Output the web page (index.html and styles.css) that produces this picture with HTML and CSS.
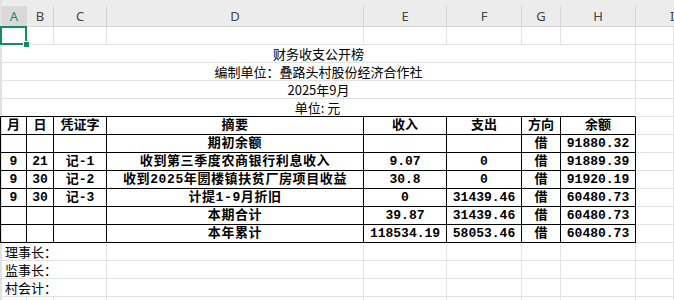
FILE: index.html
```html
<!DOCTYPE html>
<html lang="zh-CN">
<head>
<meta charset="utf-8">
<title>财务收支公开榜</title>
<link rel="stylesheet" href="styles.css">
</head>
<body>
<div class="sheet">
  <div class="colbar">
    <div class="grid">
      <div class="h sel">A</div><div class="h">B</div><div class="h">C</div><div class="h">D</div><div class="h">E</div><div class="h">F</div><div class="h">G</div><div class="h">H</div><div class="h last">I</div>
    </div>
  </div>
  <div class="grid">
    <!-- row 1 -->
    <div class="c a1"><span class="cursor"></span><span class="handle"></span></div><div class="c"></div><div class="c"></div><div class="c"></div><div class="c"></div><div class="c"></div><div class="c"></div><div class="c"></div><div class="c"></div>
    <!-- rows 2-5 titles -->
    <div class="c m8">财务收支公开榜</div><div class="c"></div>
    <div class="c m8">编制单位：叠路头村股份经济合作社</div><div class="c"></div>
    <div class="c m8">2025年9月</div><div class="c"></div>
    <div class="c m8 tb">单位: 元</div><div class="c"></div>
    <!-- row 6 header -->
    <div class="c t tl">月</div><div class="c t">日</div><div class="c t">凭证字</div><div class="c t zh">摘要</div><div class="c t">收入</div><div class="c t">支出</div><div class="c t">方向</div><div class="c t">余额</div><div class="c"></div>
    <!-- row 7 -->
    <div class="c t tl"></div><div class="c t"></div><div class="c t"></div><div class="c t zh">期初余额</div><div class="c t"></div><div class="c t"></div><div class="c t">借</div><div class="c t">91880.32</div><div class="c"></div>
    <!-- row 8 -->
    <div class="c t tl">9</div><div class="c t">21</div><div class="c t">记-1</div><div class="c t zh">收到第三季度农商银行利息收入</div><div class="c t">9.07</div><div class="c t">0</div><div class="c t">借</div><div class="c t">91889.39</div><div class="c"></div>
    <!-- row 9 -->
    <div class="c t tl">9</div><div class="c t">30</div><div class="c t">记-2</div><div class="c t zh">收到2025年圐楼镇扶贫厂房项目收益</div><div class="c t">30.8</div><div class="c t">0</div><div class="c t">借</div><div class="c t">91920.19</div><div class="c"></div>
    <!-- row 10 -->
    <div class="c t tl">9</div><div class="c t">30</div><div class="c t">记-3</div><div class="c t zh">计提1-9月折旧</div><div class="c t">0</div><div class="c t">31439.46</div><div class="c t">借</div><div class="c t">60480.73</div><div class="c"></div>
    <!-- row 11 -->
    <div class="c t tl"></div><div class="c t"></div><div class="c t"></div><div class="c t zh">本期合计</div><div class="c t">39.87</div><div class="c t">31439.46</div><div class="c t">借</div><div class="c t">60480.73</div><div class="c"></div>
    <!-- row 12 -->
    <div class="c t tl"></div><div class="c t"></div><div class="c t"></div><div class="c t zh">本年累计</div><div class="c t">118534.19</div><div class="c t">58053.46</div><div class="c t">借</div><div class="c t">60480.73</div><div class="c"></div>
    <!-- rows 13-15 signatures -->
    <div class="c m3">理事长：</div><div class="c"></div><div class="c"></div><div class="c"></div><div class="c"></div><div class="c"></div><div class="c"></div>
    <div class="c m3">监事长：</div><div class="c"></div><div class="c"></div><div class="c"></div><div class="c"></div><div class="c"></div><div class="c"></div>
    <div class="c m3">村会计：</div><div class="c"></div><div class="c"></div><div class="c"></div><div class="c"></div><div class="c"></div><div class="c"></div>
    <!-- row 16 -->
    <div class="c"></div><div class="c"></div><div class="c"></div><div class="c"></div><div class="c"></div><div class="c"></div><div class="c"></div><div class="c"></div><div class="c"></div>
  </div>
</div>
</body>
</html>
```

FILE: styles.css
```css
html, body {
  margin: 0;
  padding: 0;
  overflow: hidden;
  background: #fff;
}
body {
  font-family: "Noto Sans CJK SC", sans-serif;
  font-size: 13px;
  color: #000;
}
.sheet {
  border-left: 2px solid #e1e1e1;
}
.grid {
  display: grid;
  grid-template-columns: 25px 27px 53px 257px 83px 75px 39px 75px 1fr;
}
.colbar {
  background: #ececec;
  padding-top: 6px;
}
.h {
  height: 21px;
  box-sizing: border-box;
  border-right: 1px solid #d6d6d6;
  border-bottom: 1px solid #d6d6d6;
  display: flex;
  align-items: center;
  justify-content: center;
  font-family: "Noto Sans", sans-serif;
  font-size: 13px;
  color: #444;
  overflow: hidden;
}
.h.last {
  justify-content: flex-start;
  padding-left: 34px;
  border-right: 0;
}
.h.sel {
  background: #d9d9d9;
  color: #178a60;
}
.c {
  height: 18px;
  box-sizing: border-box;
  border-right: 1px solid #e2e2e2;
  border-bottom: 1px solid #e2e2e2;
  display: flex;
  align-items: center;
  justify-content: center;
  white-space: nowrap;
  overflow: hidden;
  line-height: 17px;
}
.m8 {
  grid-column: span 8;
}
.m3 {
  grid-column: span 3;
  justify-content: flex-start;
  padding-left: 3px;
}
.tb {
  border-bottom-color: #000;
  margin-left: -2px;
}
.t {
  border-right-color: #000;
  border-bottom-color: #000;
  font-family: "Liberation Mono", "Noto Sans CJK SC", monospace;
  font-weight: 700;
}
.tl {
  margin-left: -2px;
  border-left: 1px solid #000;
}
.zh {
  letter-spacing: 0.6px;
}
.a1 {
  position: relative;
  overflow: visible;
}
.cursor {
  position: absolute;
  left: -2px;
  top: -1px;
  width: 27px;
  height: 19px;
  box-sizing: border-box;
  border: 2px solid #178a60;
}
.handle {
  position: absolute;
  left: 21px;
  top: 14px;
  width: 7px;
  height: 7px;
  box-sizing: border-box;
  background: #178a60;
  border: 1px solid #fff;
  z-index: 2;
}
```
